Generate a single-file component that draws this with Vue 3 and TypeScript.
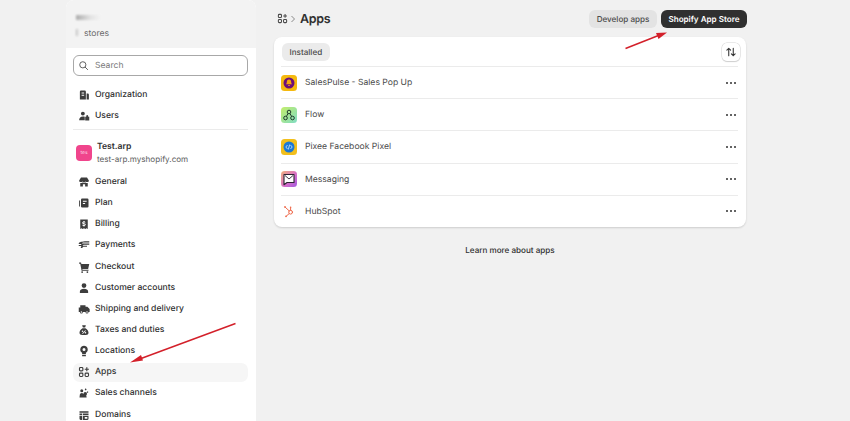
<script setup lang="ts">
interface NavItem {
  label: string
  icon: string
  active?: boolean
}

interface AppItem {
  name: string
  kind: string
}

// filled glyphs on a 16 unit box
const icons: Record<string, string> = {
  org: 'M2.500 3.500A1.500 1.500 0 0 1 4 2h5a1.500 1.500 0 0 1 1.500 1.500V14h-8zM4.800 4.500v1.600h3.400V4.500zM4.800 7.500v1.600h3.400V7.500zM11.500 6h1.500A1.500 1.500 0 0 1 14.500 7.500V14h-3z',
  users: 'M6.500 2.200a2.600 2.600 0 1 1 0 5.200 2.600 2.600 0 0 1 0-5.200zM1.500 13.500c0-3 2-5 5-5 1 0 1.800.2 2.500.5v4.500zM12 6.500a1.600 1.600 0 0 1 1.600 1.600V9H15v5H9.600V9H11v-.9A1.600 1.600 0 0 1 12 6.500z',
  general: 'M4 2h8l2.500 4a2 2 0 0 1-2.500 2 2.400 2.400 0 0 1-2-.8 2.600 2.600 0 0 1-4 0 2.400 2.400 0 0 1-2 .8 2 2 0 0 1-2.500-2zM3 9.400c1 .2 2 0 3-.6.6.4 1.300.6 2 .6s1.400-.2 2-.6c1 .6 2 .8 3 .6V14H9.500v-3h-3v3H3z',
  plan: 'M1.500 4.500h1.200v8H1.500zM4 3.500A1.500 1.500 0 0 1 5.500 2h7A1.500 1.500 0 0 1 14 3.500v9a1.500 1.500 0 0 1-1.500 1.500h-7A1.500 1.500 0 0 1 4 12.500zM6.500 5v1.300h5V5zM6.500 8v1.300h3V8z',
  billing: 'M3 2h10v12.500l-1.700-1-1.600 1-1.700-1-1.700 1-1.600-1-1.700 1zM7.300 4v.8c-1 .2-1.600.9-1.600 1.700 0 1 .8 1.500 2.300 1.800.8.2 1 .3 1 .6s-.4.5-1 .5-1.100-.2-1.500-.6l-.8.9c.4.400 1 .7 1.600.8v.8h1.400v-.8c1-.2 1.600-.9 1.600-1.700 0-1-.8-1.500-2.300-1.800-.8-.2-1-.3-1-.6s.4-.5 1-.5 1 .2 1.300.5l.8-.9c-.4-.400-.9-.600-1.400-.700V4z',
  payments: 'M1 5.500C3 3.500 6 3 15 3v1.500H6.500L5 6h10v1.500H7.500L6 9h6v1.300H7L5.500 12H3.500l1-2.700H1V8h2.800l1-1.500H1z',
  checkout: 'M1.500 2H4l.5 2H15l-1.500 6.500H5.800L6 11.500h8V13H4.800L3 3.500H1.500zM5.500 13.500a1.200 1.200 0 1 1 0 2.400 1.200 1.200 0 0 1 0-2.400zM12.500 13.500a1.200 1.200 0 1 1 0 2.400 1.200 1.200 0 0 1 0-2.400z',
  customer: 'M8 1.500a3.200 3.200 0 1 1 0 6.400 3.200 3.200 0 0 1 0-6.400zM2.500 14.500v-2C2.500 10.300 5 9 8 9s5.500 1.300 5.500 3.500v2z',
  shipping: 'M3 3h7v2h2.500L15.500 8v4H14a2 2 0 0 1-4 0H6.500a2 2 0 0 1-4 0H1V6h2zM4.500 11a1 1 0 1 0 0 2 1 1 0 0 0 0-2zM12 11a1 1 0 1 0 0 2 1 1 0 0 0 0-2z',
  taxes: 'M5.500 1.500h5L9.500 4.500h-3zM6 5.500h4C12.500 7 14 9.500 14 11.500c0 2-1.500 3-3.500 3h-5C3.500 14.500 2 13.500 2 11.500 2 9.500 3.500 7 6 5.500zM6 8.500a1 1 0 1 0 0 2 1 1 0 0 0 0-2zM10 10.500a1 1 0 1 0 0 2 1 1 0 0 0 0-2zM9.700 8.200 5.500 12.700l.8.700 4.200-4.500z',
  locations: 'M8 1a5 5 0 0 1 2.500 9.300V12h-5v-1.700A5 5 0 0 1 8 1zM8 4a2 2 0 1 0 0 4 2 2 0 0 0 0-4zM5.500 13h5v2h-5z',
  sales: 'M10 1.500l1.500 1.500-1 1.500L9 3.500zM5 3a2 2 0 1 1 0 4 2 2 0 0 1 0-4zM12.500 5.500l1.500 1-1.500 1.500-1-1zM9.500 6.500a2.500 2.500 0 0 1 2.500 2.500c0 1-.5 1.600-1 2l.5 3H6.500L4.500 14H2l.5-4c.2-1 1-2 2.500-2 1 0 1.800.5 2.200 1.300.3-1.600 1-2.800 2.300-2.800z',
  domains: 'M2 3h12v2H2zM2 6h3.500v2H2zM6.500 6H14v2H6.500zM2 9h3.500v5.500H3.500A1.500 1.500 0 0 1 2 13zM6.500 9H14v4a1.500 1.500 0 0 1-1.500 1.500h-6zM9 10.500v2.500h3.500v-2.500z'
}

const topNav: NavItem[] = [
  { label: 'Organization', icon: 'org' },
  { label: 'Users', icon: 'users' }
]

const storeNav: NavItem[] = [
  { label: 'General', icon: 'general' },
  { label: 'Plan', icon: 'plan' },
  { label: 'Billing', icon: 'billing' },
  { label: 'Payments', icon: 'payments' },
  { label: 'Checkout', icon: 'checkout' },
  { label: 'Customer accounts', icon: 'customer' },
  { label: 'Shipping and delivery', icon: 'shipping' },
  { label: 'Taxes and duties', icon: 'taxes' },
  { label: 'Locations', icon: 'locations' },
  { label: 'Apps', icon: 'apps', active: true },
  { label: 'Sales channels', icon: 'sales' },
  { label: 'Domains', icon: 'domains' }
]

const apps: AppItem[] = [
  { name: 'SalesPulse - Sales Pop Up', kind: 'pulse' },
  { name: 'Flow', kind: 'flow' },
  { name: 'Pixee Facebook Pixel', kind: 'pixee' },
  { name: 'Messaging', kind: 'messaging' },
  { name: 'HubSpot', kind: 'hubspot' }
]
</script>

<template>
  <div class="page">
    <aside class="sidebar">
      <div class="org-head">
        <div class="org-name"><span class="smudge"></span></div>
        <div class="org-count"><span class="smudge small"></span>stores</div>
      </div>

      <div class="side-body">
        <label class="search">
          <svg viewBox="0 0 16 16" class="search-icon">
            <circle cx="7" cy="7" r="4.500" fill="none" stroke="#5c5c5c" stroke-width="1.400" />
            <path d="M10.500 10.500 14 14" stroke="#5c5c5c" stroke-width="1.400" stroke-linecap="round" />
          </svg>
          <span>Search</span>
        </label>

        <nav class="nav">
          <a v-for="item in topNav" :key="item.label" class="nav-row">
            <svg viewBox="0 0 16 16" class="nav-icon"><path :d="icons[item.icon]" fill="#3d3d3d" fill-rule="evenodd" /></svg>
            {{ item.label }}
          </a>
        </nav>

        <hr class="divider" />

        <div class="store">
          <div class="store-badge">tes</div>
          <div>
            <div class="store-name">Test.arp</div>
            <div class="store-url">test-arp.myshopify.com</div>
          </div>
        </div>

        <nav class="nav">
          <a v-for="item in storeNav" :key="item.label" class="nav-row" :class="{ active: item.active }">
            <svg v-if="item.icon === 'apps'" viewBox="0 0 16 16" class="nav-icon" fill="none" stroke="#3d3d3d" stroke-width="1.500">
              <rect x="2" y="2" width="4.500" height="4.500" rx="1.200" />
              <rect x="2" y="9.500" width="4.500" height="4.500" rx="1.200" />
              <rect x="9.500" y="9.500" width="4.500" height="4.500" rx="1.200" />
              <path d="M11.750 1.500v5.500M9 4.250h5.500" />
            </svg>
            <svg v-else viewBox="0 0 16 16" class="nav-icon"><path :d="icons[item.icon]" fill="#3d3d3d" fill-rule="evenodd" /></svg>
            {{ item.label }}
          </a>
        </nav>
      </div>
    </aside>

    <main class="main">
      <header class="top">
        <svg viewBox="0 0 16 16" class="crumb-icon" fill="none" stroke="#4a4a4a" stroke-width="1.500">
          <rect x="2" y="2" width="4.500" height="4.500" rx="1.200" />
          <rect x="2" y="9.500" width="4.500" height="4.500" rx="1.200" />
          <rect x="9.500" y="9.500" width="4.500" height="4.500" rx="1.200" />
          <path d="M11.750 1.500v5.500M9 4.250h5.500" />
        </svg>
        <svg viewBox="0 0 8 8" class="crumb-sep" fill="none" stroke="#8a8a8a" stroke-width="1">
          <path d="M2.500 1 5.500 4 2.500 7" />
        </svg>
        <h1>Apps</h1>
        <div class="actions">
          <button class="btn">Develop apps</button>
          <button class="btn dark">Shopify App Store</button>
        </div>
      </header>

      <section class="card">
        <div class="tabs">
          <span class="tab">Installed</span>
          <button class="sort">
            <svg viewBox="0 0 16 16" fill="none" stroke="#303030" stroke-width="1.400" stroke-linecap="round" stroke-linejoin="round">
              <path d="M5 13V3M2.500 5.500 5 3l2.500 2.500M11 3v10M8.500 10.500 11 13l2.500-2.500" />
            </svg>
          </button>
        </div>

        <div v-for="app in apps" :key="app.name" class="app-row">
          <svg viewBox="0 0 16 16" class="app-icon">
            <template v-if="app.kind === 'pulse'">
              <rect width="16" height="16" rx="3.500" fill="#f5b90f" />
              <circle cx="8" cy="8" r="5.500" fill="#6d0f7c" />
              <path d="M8 4.500c1.600 0 2.200 1.300 2.200 2.700 0 1 .6 1.500.9 2.100H4.900c.3-.6.900-1.100.9-2.100 0-1.400.6-2.700 2.200-2.700zM7 10h2a1 1 0 0 1-2 0z" fill="#f5a50f" />
            </template>
            <template v-else-if="app.kind === 'flow'">
              <defs>
                <linearGradient id="flow" x1="0" y1="0" x2="1" y2="1">
                  <stop offset="0" stop-color="#c4ee6a" />
                  <stop offset="1" stop-color="#7fdcc4" />
                </linearGradient>
              </defs>
              <rect width="16" height="16" rx="3.500" fill="url(#flow)" />
              <g fill="none" stroke="#1f3a2c" stroke-width="1">
                <circle cx="8" cy="5" r="1.800" />
                <circle cx="4.500" cy="11" r="1.800" />
                <circle cx="11.500" cy="11" r="1.800" />
                <path d="M7 6.600 5.400 9.400M9 6.600l1.600 2.800" />
              </g>
            </template>
            <template v-else-if="app.kind === 'pixee'">
              <rect width="16" height="16" rx="3.500" fill="#f2bf1d" />
              <circle cx="8" cy="8" r="5.500" fill="#1a78d6" />
              <path d="M6.500 6 4.800 8l1.700 2M9.500 6l1.700 2-1.700 2M8.700 5.500 7.300 10.500" fill="none" stroke="#d5ecff" stroke-width=".8" />
            </template>
            <template v-else-if="app.kind === 'messaging'">
              <defs>
                <linearGradient id="msg" x1="0" y1="0" x2="1" y2="1">
                  <stop offset="0" stop-color="#f2b37c" />
                  <stop offset=".55" stop-color="#d86fc7" />
                  <stop offset="1" stop-color="#a25ae0" />
                </linearGradient>
              </defs>
              <rect width="16" height="16" rx="3.500" fill="url(#msg)" />
              <path d="M3 3.500h10v8H6l-3 2.200z" fill="#fff" stroke="#2c2433" stroke-width="1.100" stroke-linejoin="round" />
              <path d="M4 4.500 8 8l4-3.500" fill="none" stroke="#2c2433" stroke-width=".9" />
            </template>
            <template v-else>
              <!-- hubspot sprocket, smaller than the tiles around it -->
              <g fill="none" stroke="#ef6a4c" stroke-width="1" stroke-linecap="round">
                <circle cx="9.600" cy="9.200" r="1.900" />
                <path d="M4.400 4.400 8.200 7.900M9.600 4.600V7.300M5.400 13 8.200 10.600" />
              </g>
              <circle cx="4" cy="4" r=".9" fill="#ef6a4c" />
              <circle cx="9.600" cy="4.200" r=".8" fill="#ef6a4c" />
              <circle cx="5" cy="13.300" r=".9" fill="#ef6a4c" />
            </template>
          </svg>
          <span class="app-name">{{ app.name }}</span>
          <span class="dots"><i></i><i></i><i></i></span>
        </div>
      </section>

      <a class="learn">Learn more about apps</a>
    </main>

    <!-- red annotation arrows drawn over the screenshot -->
    <svg class="arrows" viewBox="0 0 850 421">
      <g fill="#d3202a" stroke="#d3202a">
        <path d="M235.500 323.500 137 360" stroke-width="1.500" fill="none" />
        <path d="M130 362.500 141 355 143 360.500z" stroke="none" />
        <path d="M625.500 48.500 661 34.500" stroke-width="1.500" fill="none" />
        <path d="M667 32.500 656 33 658.500 39z" stroke="none" />
      </g>
    </svg>
  </div>
</template>

<style>
html,
body {
  margin: 0;
  background: #f1f1f1;
  overflow: hidden;
}
</style>

<style scoped>
.page {
  position: relative;
  display: flex;
  align-items: flex-start;
  width: 850px;
  height: 421px;
  padding-left: 66px;
  box-sizing: border-box;
  overflow: hidden;
  background: #f1f1f1;
  font-family: Inter, "Liberation Sans", sans-serif;
  font-size: 8.600px;
  color: #303030;
  text-rendering: geometricPrecision;
}

.sidebar {
  width: 190px;
  flex-shrink: 0;
  background: #fff;
  border-radius: 8px 8px 0 0;
}

.org-head {
  height: 48px;
  padding: 13px 10px 0;
  box-sizing: border-box;
  background: #f3f3f3;
  border-radius: 8px 8px 0 0;
}

.org-name {
  height: 12px;
}

.smudge {
  display: block;
  width: 24px;
  height: 5px;
  margin-top: 2px;
  background: linear-gradient(90deg, #8f8f8f, #dcdcdc 60%, #f3f3f3);
  opacity: 0.7;
  filter: blur(1px);
}

.smudge.small {
  display: inline-block;
  width: 3px;
  height: 7px;
  margin: 0 5px 0 0;
}

.org-count {
  color: #6b6b6b;
  line-height: 14px;
}

.side-body {
  padding: 7px 8px 0 7px;
}

.search {
  display: flex;
  align-items: center;
  gap: 6px;
  height: 21px;
  padding-left: 4px;
  box-sizing: border-box;
  border: 1px solid #a8a8a8;
  border-radius: 6px;
  background: #fff;
  color: #7a7a7a;
}

.search span {
  padding-top: 1px;
}

.search-icon {
  width: 11px;
  height: 11px;
}

.nav {
  display: flex;
  flex-direction: column;
}

.search + .nav {
  margin-top: 8px;
}

.nav-row {
  display: flex;
  align-items: center;
  gap: 5px;
  height: 21.160px;
  padding-left: 5px;
  box-sizing: border-box;
  font-weight: 500;
  color: #303030;
  border-radius: 7px;
}

.nav-row.active {
  border-top: 1px solid transparent;
  border-bottom: 1px solid transparent;
  background: #f6f6f6 padding-box;
}

.nav-icon {
  width: 12px;
  height: 12px;
  flex-shrink: 0;
}

.divider {
  height: 1px;
  margin: 3px 0 0;
  border: 0;
  background: #ebebeb;
}

.store {
  display: flex;
  align-items: center;
  gap: 5px;
  height: 32px;
  margin: 7px 0 2px 3px;
}

.store-badge {
  display: flex;
  align-items: center;
  justify-content: center;
  width: 16px;
  height: 16px;
  border-radius: 4px;
  background: #f0458c;
  color: #fbd0e2;
  font-size: 5px;
}

.store-name {
  font-weight: 600;
  line-height: 12px;
}

.store-url {
  color: #5c5c5c;
  font-size: 8.100px;
  line-height: 12px;
}

.main {
  display: flex;
  flex-direction: column;
  width: 472px;
  margin-left: 18px;
}

.top {
  display: flex;
  align-items: center;
  height: 37px;
}

.crumb-icon {
  width: 11px;
  height: 11px;
  margin-left: 3px;
}

.crumb-sep {
  width: 8px;
  height: 8px;
  margin: 0 0 0 1px;
}

h1 {
  margin: 2px 0 0 3px;
  font-size: 12.500px;
  font-weight: 600;
  letter-spacing: -0.3px;
  color: #303030;
}

.actions {
  display: flex;
  gap: 4px;
  margin: 0 -1px 0 auto;
}

.btn {
  height: 18px;
  padding: 0 7.500px;
  border: 0;
  border-radius: 6px;
  background: #e3e3e3;
  color: #4d4d4d;
  font: 500 8.100px Inter, "Liberation Sans", sans-serif;
  text-rendering: geometricPrecision;
}

.btn.dark {
  background: #303030;
  color: #fff;
  font-weight: 600;
}

.card {
  background: #fff;
  border-radius: 8px;
  box-shadow: 0 1px 2px rgba(0, 0, 0, 0.15);
}

.tabs {
  display: flex;
  align-items: center;
  justify-content: space-between;
  height: 29px;
  padding: 0 6px 0 8px;
}

.tab {
  display: flex;
  align-items: center;
  height: 18px;
  padding: 0 7.500px;
  border-radius: 6px;
  background: #ebebeb;
  font-size: 8.100px;
  font-weight: 500;
  color: #4a4a4a;
}

.sort {
  display: flex;
  align-items: center;
  justify-content: center;
  width: 18px;
  height: 18px;
  padding: 0;
  border: 0;
  border-radius: 5px;
  background: #fff;
  box-shadow: 0 0 0 0.5px #d4d4d4, 0 1px 1px rgba(0, 0, 0, 0.2);
}

.sort svg {
  width: 12px;
  height: 12px;
}

.app-row {
  display: flex;
  align-items: center;
  height: 32.200px;
  margin: 0 8px 0 7px;
  border-top: 1px solid #ebebeb;
  box-sizing: border-box;
}

.app-icon {
  width: 16px;
  height: 16px;
  flex-shrink: 0;
}

.app-name {
  margin-left: 8px;
  padding-top: 1px;
  color: #4a4a4a;
}

.dots {
  display: flex;
  gap: 2px;
  margin-left: auto;
  margin-right: 2px;
}

.dots i {
  width: 2px;
  height: 2px;
  border-radius: 50%;
  background: #303030;
}

.learn {
  margin-top: 18px;
  text-align: center;
  font-size: 8.100px;
  font-weight: 500;
  color: #303030;
}

.arrows {
  position: absolute;
  inset: 0;
  width: 850px;
  height: 421px;
  pointer-events: none;
}
</style>
